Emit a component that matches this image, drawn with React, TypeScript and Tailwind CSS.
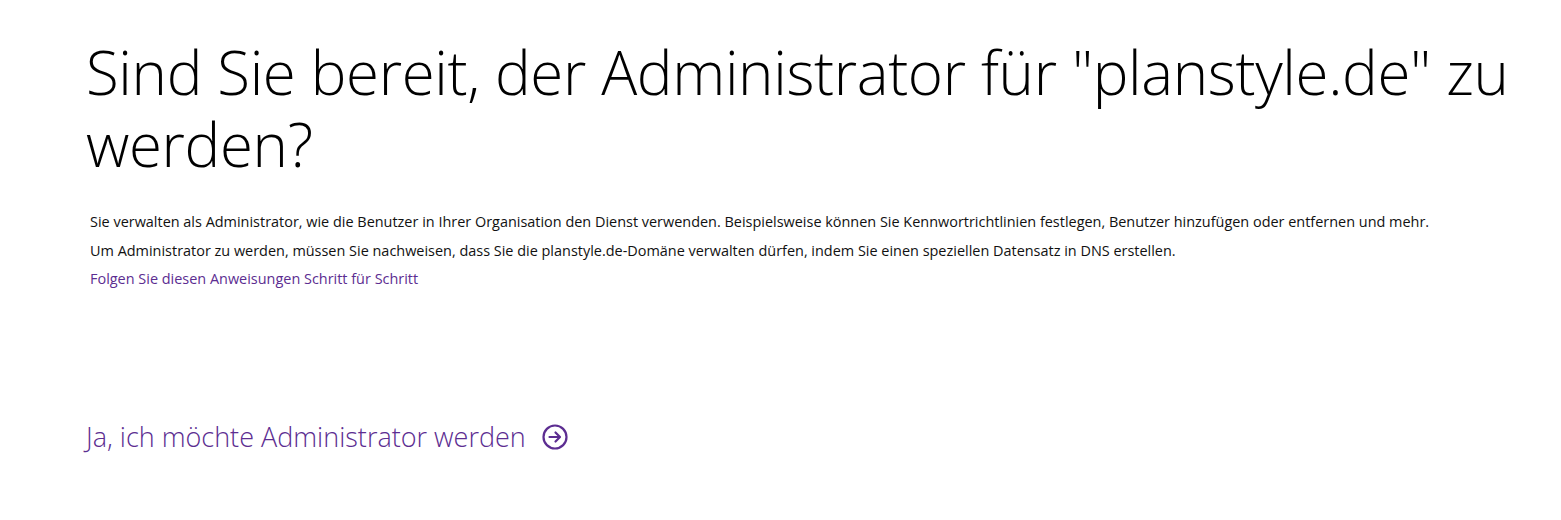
import React from "react";

export default function App() {
  return (
    <div className="bg-white w-full min-h-[520px] text-black" style={{ fontFamily: '"Open Sans", "Noto Sans", sans-serif' }}>
      <div className="pl-[86px] pr-[40px] pt-[36px]">
        <h1 className="text-[60px] leading-[72px] font-light tracking-[-0.35px] max-w-[1440px]">
          Sind Sie bereit, der Administrator für "planstyle.de" zu werden?
        </h1>
        <div className="pl-[4px] mt-[28px] text-[14.45px] leading-[28.5px] font-normal text-[#111]">
          <p>Sie verwalten als Administrator, wie die Benutzer in Ihrer Organisation den Dienst verwenden. Beispielsweise können Sie Kennwortrichtlinien festlegen, Benutzer hinzufügen oder entfernen und mehr.</p>
          <p>Um Administrator zu werden, müssen Sie nachweisen, dass Sie die planstyle.de-Domäne verwalten dürfen, indem Sie einen speziellen Datensatz in DNS erstellen.</p>
          <a className="text-[#5c2d91] block">Folgen Sie diesen Anweisungen Schritt für Schritt</a>
        </div>
        <a className="mt-[125px] flex items-center gap-[16px] text-[27px] leading-[36px] font-light text-[#5c2d91]">
          <span>Ja, ich möchte Administrator werden</span>
          <svg width="26" height="26" viewBox="0 0 26 26" fill="none" stroke="#5c2d91" strokeWidth="2.2">
            <circle cx="13" cy="13" r="11.5" />
            <path d="M7.5 13h10M13.5 8.5l4.5 4.5-4.5 4.5" strokeLinecap="round" strokeLinejoin="round" />
          </svg>
        </a>
      </div>
    </div>
  );
}
